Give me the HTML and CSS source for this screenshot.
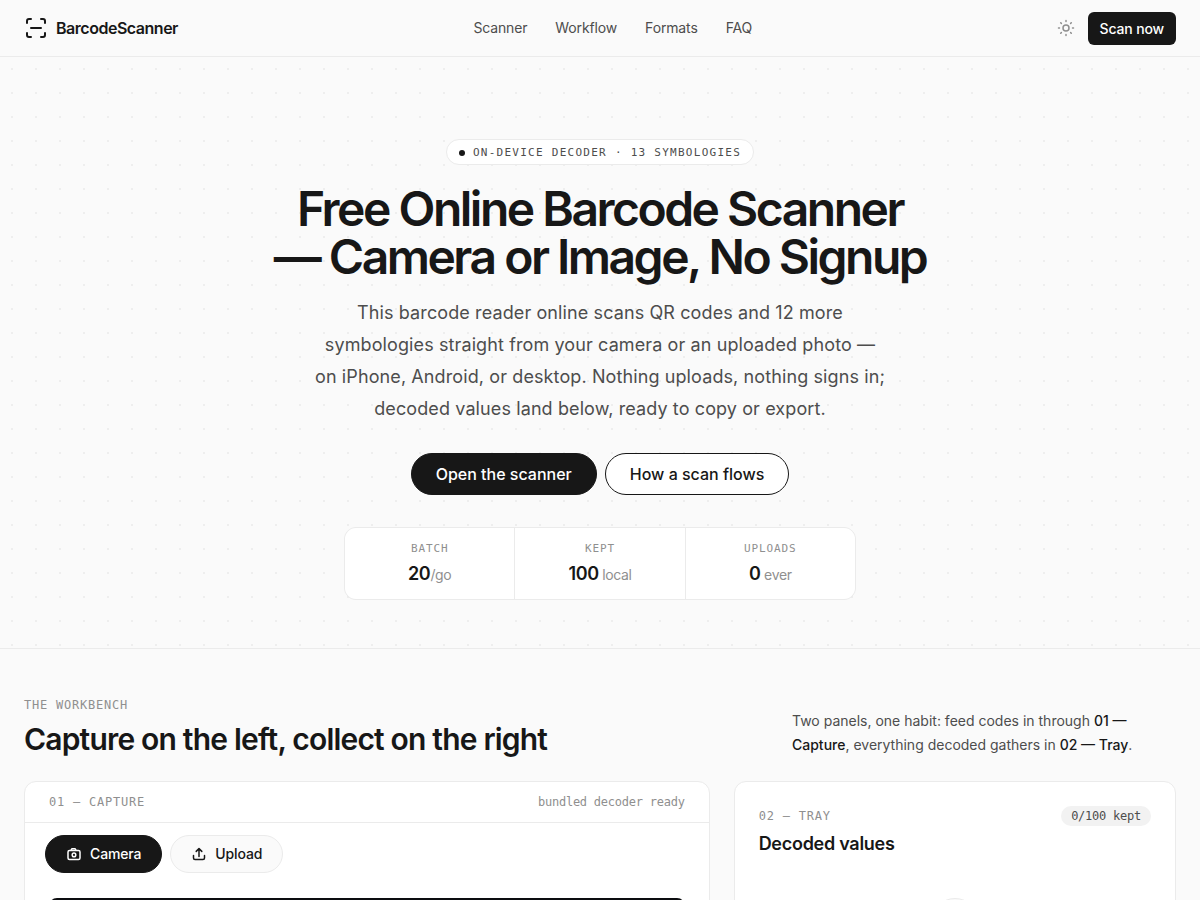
FILE: index.html
```html
<!DOCTYPE html>
<html lang="en">
<head>
  <meta charset="UTF-8">
  <title>BarcodeScanner</title>
  <meta name="viewport" content="width=device-width, initial-scale=1.0">
  <link rel="stylesheet" href="styles.css">
</head>
<body>

  <header class="header">
    <a class="brand" href="#">
      <svg width="24" height="24" viewBox="0 0 24 24" fill="none" stroke="currentColor" stroke-width="2" stroke-linecap="round" stroke-linejoin="round" aria-hidden="true">
        <path d="M3 7V5a2 2 0 0 1 2-2h2M17 3h2a2 2 0 0 1 2 2v2M21 17v2a2 2 0 0 1-2 2h-2M7 21H5a2 2 0 0 1-2-2v-2M7 12h10"/>
      </svg>
      BarcodeScanner
    </a>
    <nav class="nav">
      <a href="#scanner">Scanner</a>
      <a href="#workflow">Workflow</a>
      <a href="#formats">Formats</a>
      <a href="#faq">FAQ</a>
    </nav>
    <div class="header-actions">
      <button type="button" class="theme-btn" aria-label="Toggle theme">
        <svg width="18" height="18" viewBox="0 0 24 24" fill="none" stroke="currentColor" stroke-width="2" stroke-linecap="round" aria-hidden="true">
          <circle cx="12" cy="12" r="4"/>
          <path d="M12 2v1.3M12 20.7V22M4.93 4.93l.9.9M18.17 18.17l.9.9M2 12h1.3M20.7 12H22M5.83 18.17l-.9.9M19.07 4.93l-.9.9"/>
        </svg>
      </button>
      <a class="scan-btn" href="#scanner">Scan now</a>
    </div>
  </header>

  <main>
    <section class="hero">
      <p class="badge"><span class="badge-dot"></span>ON-DEVICE DECODER · 13 SYMBOLOGIES</p>
      <h1>Free Online Barcode Scanner<br>— Camera or Image, No Signup</h1>
      <p class="lead">This barcode reader online scans QR codes and 12 more symbologies straight from your camera or an uploaded photo — on iPhone, Android, or desktop. Nothing uploads, nothing signs in; decoded values land below, ready to copy or export.</p>
      <div class="cta">
        <a class="btn btn-dark" href="#scanner">Open the scanner</a>
        <a class="btn btn-light" href="#workflow">How a scan flows</a>
      </div>
      <dl class="stats">
        <div class="stat"><dt>BATCH</dt><dd>20<span>/go</span></dd></div>
        <div class="stat"><dt>KEPT</dt><dd>100<span> local</span></dd></div>
        <div class="stat"><dt>UPLOADS</dt><dd>0<span> ever</span></dd></div>
      </dl>
    </section>

    <section class="workbench" id="scanner">
      <div class="section-head">
        <div>
          <p class="eyebrow">THE WORKBENCH</p>
          <h2>Capture on the left, collect on the right</h2>
        </div>
        <p class="section-note">Two panels, one habit: feed codes in through <strong>01 — Capture</strong>, everything decoded gathers in <strong>02 — Tray</strong>.</p>
      </div>

      <div class="panels">
        <div class="panel">
          <div class="panel-bar">
            <span class="eyebrow">01 — CAPTURE</span>
            <span class="status">bundled decoder ready</span>
          </div>
          <div class="tabs">
            <button type="button" class="tab tab-active">
              <svg width="16" height="16" viewBox="0 0 16 16" fill="none" stroke="currentColor" stroke-width="1.5" stroke-linecap="round" stroke-linejoin="round" aria-hidden="true">
                <rect x="2" y="4.5" width="12" height="9" rx="1.5"/>
                <path d="M5 4.3l.8-1.5h3.4l.8 1.5"/>
                <circle cx="8" cy="8.9" r="1.8"/>
              </svg>
              Camera
            </button>
            <button type="button" class="tab">
              <svg width="16" height="16" viewBox="0 0 16 16" fill="none" stroke="currentColor" stroke-width="1.5" stroke-linecap="round" stroke-linejoin="round" aria-hidden="true">
                <path d="M8 10.5V3M5.2 5.4L8 2.6l2.8 2.8M2.5 9.5V12A1.5 1.5 0 0 0 4 13.5h8a1.5 1.5 0 0 0 1.5-1.5V9.5"/>
              </svg>
              Upload
            </button>
          </div>
          <div class="capture">
            <div class="viewer"></div>
          </div>
        </div>

        <div class="panel tray">
          <div class="tray-head">
            <span class="eyebrow">02 — TRAY</span>
            <span class="count">0/100 kept</span>
          </div>
          <h3>Decoded values</h3>
          <div class="empty-icon"></div>
        </div>
      </div>
    </section>
  </main>

</body>
</html>
```
FILE: styles.css
```css
* {
  box-sizing: border-box;
}

body {
  font-family: Inter, "Liberation Sans", sans-serif;
  background-color: #fafafa;
  color: #171717;
  margin: 0;
}

h1, h2, h3, p, dl, dd {
  margin: 0;
}

a {
  color: inherit;
  text-decoration: none;
}

button {
  font: inherit;
  cursor: pointer;
}

svg {
  display: block;
}

/* Header */
.header {
  display: flex;
  align-items: center;
  justify-content: space-between;
  height: 57px;
  padding: 0 24px;
  border-bottom: 1px solid #ebebeb;
}

.brand {
  display: flex;
  align-items: center;
  gap: 8px;
  font-size: 16px;
  font-weight: 600;
  letter-spacing: -0.03em;
}

.nav {
  display: flex;
  gap: 28px;
  font-size: 14px;
  line-height: 20px;
  letter-spacing: -0.01em;
  color: #4d4d4d;
}

.header-actions {
  display: flex;
  align-items: center;
  gap: 4px;
}

.theme-btn {
  display: flex;
  align-items: center;
  justify-content: center;
  width: 36px;
  height: 36px;
  padding: 0;
  border: none;
  background: none;
  color: #8f8f8f;
}

.scan-btn {
  padding: 0 12px;
  border-radius: 6px;
  background: #171717;
  color: #fff;
  font-size: 14px;
  font-weight: 500;
  line-height: 33px;
  letter-spacing: -0.01em;
}

/* Hero */
.hero {
  display: flex;
  flex-direction: column;
  align-items: center;
  padding: 82px 24px 48px;
  border-bottom: 1px solid #ebebeb;
  background-image: radial-gradient(circle, #eeeeee 1px, transparent 1px);
  background-size: 24px 24px;
  text-align: center;
}

.badge {
  display: flex;
  align-items: center;
  gap: 8px;
  padding: 1px 12px 0;
  border: 1px solid #ebebeb;
  border-radius: 13px;
  background: #fff;
  color: #4d4d4d;
  font-family: "DejaVu Sans Mono", monospace;
  font-size: 11px;
  line-height: 23px;
  letter-spacing: 0.115em;
}

.badge-dot {
  width: 6px;
  height: 6px;
  border-radius: 50%;
  background: #171717;
}

h1 {
  margin-top: 20px;
  font-size: 48px;
  font-weight: 600;
  line-height: 48px;
  letter-spacing: -0.052em;
}

.lead {
  max-width: 572px;
  margin-top: 16px;
  color: #4d4d4d;
  font-size: 18px;
  line-height: 32px;
  letter-spacing: 0.006em;
}

.cta {
  display: flex;
  gap: 8px;
  margin-top: 28px;
}

.btn {
  padding: 0 24px;
  border: 1px solid #171717;
  border-radius: 21px;
  font-size: 16px;
  font-weight: 500;
  line-height: 40px;
}

.btn-dark {
  background: #171717;
  color: #fff;
}

.btn-light {
  background: #fff;
}

.stats {
  display: grid;
  grid-template-columns: repeat(3, 1fr);
  gap: 1px;
  width: 100%;
  max-width: 512px;
  margin-top: 32px;
  border: 1px solid #ebebeb;
  border-radius: 12px;
  background: #ebebeb;
  overflow: hidden;
}

.stat {
  padding: 12px 16px;
  background: #fff;
}

.stat dt {
  color: #8f8f8f;
  font-family: "DejaVu Sans Mono", monospace;
  font-size: 11px;
  line-height: 17px;
  letter-spacing: 0.08em;
}

.stat dd {
  margin-top: 4px;
  font-size: 18px;
  font-weight: 600;
  line-height: 26px;
  height: 26px;
  letter-spacing: -0.02em;
}

.stat span {
  color: #8f8f8f;
  font-size: 14px;
  font-weight: 400;
}

/* Workbench */
.workbench {
  padding: 48px 24px;
}

.section-head {
  display: flex;
  align-items: flex-end;
  justify-content: space-between;
  gap: 24px;
}

.eyebrow {
  color: #8f8f8f;
  font-family: "DejaVu Sans Mono", monospace;
  font-size: 12px;
  line-height: 16px;
  letter-spacing: 0.065em;
}

h2 {
  margin-top: 8px;
  font-size: 30px;
  font-weight: 600;
  line-height: 36px;
  letter-spacing: -0.027em;
}

.section-note {
  width: 384px;
  color: #4d4d4d;
  font-size: 14px;
  line-height: 24px;
}

.section-note strong {
  color: #171717;
  font-weight: 500;
}

.panels {
  display: grid;
  grid-template-columns: 1.55fr 1fr;
  gap: 24px;
  margin-top: 24px;
}

.panel {
  border: 1px solid #ebebeb;
  border-radius: 12px;
  background: #fff;
}

.panel-bar {
  display: flex;
  align-items: center;
  justify-content: space-between;
  padding: 12px 24px;
  border-bottom: 1px solid #ebebeb;
}

.status {
  color: #8f8f8f;
  font-family: "DejaVu Sans Mono", monospace;
  font-size: 12px;
  line-height: 16px;
  letter-spacing: -0.02em;
}

.tabs {
  display: flex;
  gap: 8px;
  padding: 12px 20px 0;
}

.tab {
  display: flex;
  align-items: center;
  gap: 8px;
  height: 38px;
  padding: 0 20px;
  border: 1px solid #ebebeb;
  border-radius: 19px;
  background: #fafafa;
  color: #171717;
  font-size: 14px;
  font-weight: 500;
  line-height: 20px;
  letter-spacing: -0.01em;
}

.tab-active {
  border-color: #171717;
  background: #171717;
  color: #fff;
}

.capture {
  padding: 25px 24px 24px;
}

.viewer {
  height: 360px;
  border-radius: 8px;
  background: #0c0d10;
}

.tray {
  padding: 24px;
}

.tray-head {
  display: flex;
  align-items: center;
  justify-content: space-between;
}

.count {
  padding: 2px 10px;
  border-radius: 10px;
  background: #f2f2f2;
  color: #4d4d4d;
  font-family: "DejaVu Sans Mono", monospace;
  font-size: 12px;
  line-height: 16px;
  letter-spacing: -0.02em;
}

h3 {
  margin-top: 4px;
  font-size: 18px;
  font-weight: 600;
  line-height: 28px;
  letter-spacing: -0.015em;
}

.empty-icon {
  width: 48px;
  height: 48px;
  margin: 40px auto;
  border: 1px solid #ebebeb;
  border-radius: 50%;
  background: #fafafa;
}
```
